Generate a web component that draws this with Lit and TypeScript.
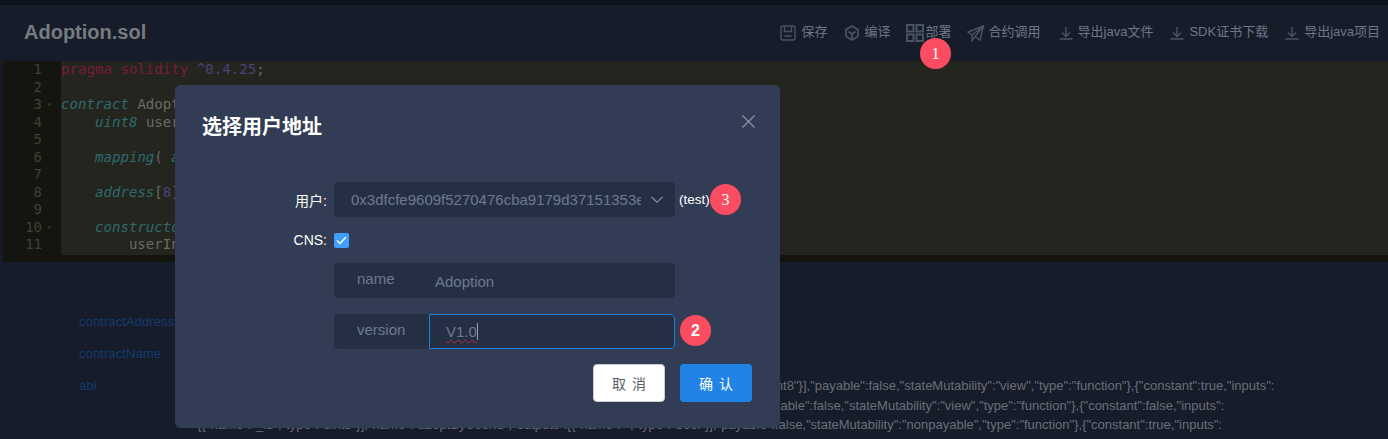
import { LitElement, html, css } from "lit";
import { customElement } from "lit/decorators.js";

const ICONS = {
  save: html`<svg class="ic" viewBox="0 0 16 16" width="16" height="16"><rect x="1" y="1" width="14" height="14" rx="2"/><path d="M4.5 1.5V6.5h7V1.5M4.5 11h7"/></svg>`,
  compile: html`<svg class="ic wide" viewBox="0 0 16 16" width="16" height="16"><path d="M8 1l6 3.4v7.2L8 15l-6-3.4V4.4z"/><path d="M4.5 6.5L8 9l3.5-2.5M8 9v5"/></svg>`,
  deploy: html`<svg class="ic thick" viewBox="0 0 18 18" width="18" height="18"><rect x="1" y="1" width="6.5" height="6.5"/><rect x="10.5" y="1" width="6.5" height="6.5"/><rect x="1" y="10.5" width="6.5" height="6.5"/><rect x="10.5" y="10.5" width="6.5" height="6.5"/></svg>`,
  call: html`<svg class="ic" viewBox="0 0 17 17" width="17" height="17"><path d="M1 7L16.5 1 13 15 8 11.5 5 16V10z"/><path d="M5 10L16.5 1 8 11.5"/></svg>`,
  down: html`<svg class="ic" viewBox="0 0 14 14" width="14" height="14"><path d="M7 1v9M3 6.5L7 10.5 11 6.5M0.5 13h13"/></svg>`,
};

const CODE = [
  html`<span class="kw">pragma solidity</span> <span class="num">^0.4.25</span>;`,
  html``,
  html`<span class="ty">contract</span> Adoption {`,
  html`    <span class="ty">uint8</span> userInfo;`,
  html``,
  html`    <span class="ty">mapping</span>( <span class="ty">address</span> =&gt; <span class="ty">uint8</span>) users;`,
  html``,
  html`    <span class="ty">address</span>[<span class="num">8</span>] adopters;`,
  html``,
  html`    <span class="ty">constructor</span>() <span class="kw">public</span> {`,
  html`        userInfo = <span class="num">1</span>;`,
];

@customElement("app-root")
export class AppRoot extends LitElement {
  static styles = css`
    :host {
      display: block;
      position: relative;
      width: 1388px;
      height: 439px;
      overflow: hidden;
      background: #161c2a;
      font-family: "Liberation Sans", "Noto Sans CJK SC", sans-serif;
    }
    .strip { height: 5px; background: #0f1320; }
    .head {
      height: 56px;
      display: flex;
      align-items: center;
      justify-content: space-between;
      padding: 0 8px 2px 24px;
      box-sizing: border-box;
    }
    .title { font-size: 20px; font-weight: 700; color: #777b80; }
    .tools { display: flex; gap: 15px; font-size: 13px; color: #6e7685; margin-top: 2px; }
    .tool { display: flex; align-items: center; gap: 5px; white-space: nowrap; }
    .tool span { padding-bottom: 5px; }
    .tool.m1 { margin-left: 1px; }
    .tool.m2 { margin-left: 2px; }
    .tool.m3 { margin-left: 3px; }
    .tool.tight { gap: 2px; }
    .ic { fill: none; stroke: #4a5364; stroke-width: 1.4; flex: none; }
    .ic.wide { stroke-width: 1.7; }
    .ic.thick { stroke-width: 2; }
    .editor {
      height: 201px;
      display: flex;
      background: #15150f;
      margin-left: 3px;
    }
    .gutter {
      width: 58px;
      flex: none;
      font: 14px/17.5px "DejaVu Sans Mono", monospace;
      color: #3f4038;
      box-sizing: border-box;
    }
    .num-line { display: flex; height: 17.5px; }
    .num-line b { font-weight: 400; width: 39px; text-align: right; }
    .num-line i { font-style: normal; margin-left: 5px; font-size: 8px; line-height: 17px; color: #3a3b34; }
    .code {
      flex: 1;
      height: 194px;
      background: #24251f;
      border-bottom-left-radius: 3px;
      font: 14.1px/17.5px "DejaVu Sans Mono", monospace;
      color: #6a6b66;
      white-space: pre;
    }
    .line { height: 17.5px; }
    .kw { color: #7a1c3a; }
    .num { color: #4f3f7a; }
    .ty { color: #2f6a6e; font-style: italic; }
    .details {
      display: grid;
      grid-template-columns: 119px 1fr;
      padding: 52px 0 0 79px;
      row-gap: 17px;
      font-size: 13px;
      line-height: 15px;
    }
    .key { color: #153a6e; white-space: nowrap; font-size: 13.2px; }
    .val { color: #6b6f78; white-space: pre; line-height: 19.5px; margin-top: -2px; min-height: 15px; }

    .dialog {
      position: absolute;
      left: 175px;
      top: 85px;
      width: 605px;
      height: 343px;
      background: #323c54;
      border-radius: 6px;
      box-sizing: border-box;
      padding: 28px 28px 0 27px;
      color: #fff;
    }
    .dhead { display: flex; justify-content: space-between; align-items: center; height: 25px; }
    .dtitle { font-size: 20px; font-weight: 700; color: #fff; }
    .close { margin-right: -3px; margin-top: -8px; }
    .close path { stroke: #8b93a5; stroke-width: 1.3; fill: none; }
    .form { margin-top: 44px; padding-left: 132px; display: flex; flex-direction: column; }
    .row { display: flex; align-items: center; }
    .row.check-row { margin-top: 15px; }
    .lab {
      width: 53px;
      margin-left: -60px;
      margin-right: 7px;
      text-align: right;
      font-size: 14px;
      color: #fff;
      white-space: nowrap;
    }
    .select {
      width: 341px;
      height: 35px;
      flex: none;
      box-sizing: border-box;
      background: #252f43;
      border-radius: 4px;
      display: flex;
      align-items: center;
      padding: 0 12px 0 17px;
      justify-content: space-between;
      color: #6c7a90;
      font-size: 15px;
    }
    .sel-text { width: 290px; overflow: hidden; white-space: nowrap; }
    .tag { margin-left: 4px; font-size: 13.5px; color: #fff; }
    .check {
      width: 15px;
      height: 15px;
      border-radius: 2px;
      background: #409eff;
      display: flex;
      align-items: center;
      justify-content: center;
    }
    .group {
      width: 341px;
      height: 35px;
      margin-top: 15px;
      display: flex;
      border-radius: 4px;
      overflow: hidden;
      background: #252f43;
      font-size: 15px;
      color: #6c7a90;
    }
    .group.second { margin-top: 16px; }
    .pre {
      width: 95px;
      flex: none;
      line-height: 32px;
      box-sizing: border-box;
      padding-left: 23px;
    }
    .inp { flex: 1; line-height: 37px; padding-left: 6px; }
    .inp.focus {
      border: 1px solid #1f7fd9;
      border-radius: 0 4px 4px 0;
      padding-left: 16px;
      line-height: 34px;
      box-sizing: border-box;
    }
    .sq { text-decoration: underline wavy #b8324a 1px; text-underline-offset: 2px; border-right: 1px solid #9aa3b5; }
    .foot { display: flex; justify-content: flex-end; gap: 15px; margin-top: 15px; }
    .btn {
      width: 72px;
      height: 38px;
      border-radius: 4px;
      box-sizing: border-box;
      display: flex;
      align-items: center;
      justify-content: center;
      font-size: 14px;
      letter-spacing: 6px;
      text-indent: 6px;
    }
    .cancel { background: #fff; color: #5a5e66; border: 1px solid #c8ccd4; }
    .ok { background: #2183e5; color: #fff; }
    .badge {
      position: absolute;
      width: 31px;
      height: 31px;
      border-radius: 50%;
      background: #fb4d62;
      color: #fff;
      display: flex;
      align-items: center;
      justify-content: center;
      font: 16px "Liberation Serif", serif;
    }
    .b1 { left: 920px; top: 38px; }
    .b2 { left: 680px; top: 315px; font-family: "Liberation Sans", sans-serif; font-weight: 700; }
    .b3 { left: 710px; top: 184px; }
  `;

  render() {
    return html`
      <div class="strip"></div>
      <div class="head">
        <div class="title">Adoption.sol</div>
        <div class="tools">
          <div class="tool">${ICONS.save}<span>保存</span></div>
          <div class="tool m1">${ICONS.compile}<span>编译</span></div>
          <div class="tool tight">${ICONS.deploy}<span>部署</span></div>
          <div class="tool">${ICONS.call}<span>合约调用</span></div>
          <div class="tool m3">${ICONS.down}<span>导出java文件</span></div>
          <div class="tool m2">${ICONS.down}<span>SDK证书下载</span></div>
          <div class="tool m2">${ICONS.down}<span>导出java项目</span></div>
        </div>
      </div>
      <div class="editor">
        <div class="gutter">
          ${CODE.map((_, i) => html`<div class="num-line"><b>${i + 1}</b>${i === 2 || i === 9 ? html`<i>▾</i>` : ""}</div>`)}
        </div>
        <div class="code">${CODE.map((l) => html`<div class="line">${l}</div>`)}</div>
      </div>
      <div class="details">
        <div class="key">contractAddress</div><div class="val"></div>
        <div class="key">contractName</div><div class="val"></div>
        <div class="key">abi</div>
        <div class="val">[{"constant":true,"inputs":[{"name":"","type":"address"}],"name":"users","outputs":[{"name":"","type":"uint8"}],"payable":false,"stateMutability":"view","type":"function"},{"constant":true,"inputs":
[{"name":"","type":"uint256"}],"name":"adopterAddresses","outputs":[{"name":"","type":"address"}],"payable":false,"stateMutability":"view","type":"function"},{"constant":false,"inputs":
[{"name":"_id","type":"uint8"}],"name":"adoptByUserId","outputs":[{"name":"","type":"bool"}],"payable":false,"stateMutability":"nonpayable","type":"function"},{"constant":true,"inputs":
[{"name":"_addr","type":"address"}],"name":"getUser","outputs":[{"name":"","type":"uint8"}],"payable":false,"stateMutability":"view","type":"function"}</div>
      </div>

      <div class="dialog">
        <div class="dhead">
          <div class="dtitle">选择用户地址</div>
          <svg class="close" width="13" height="13" viewBox="0 0 13 13"><path d="M.5.5l12 12M12.5.5l-12 12"/></svg>
        </div>
        <div class="form">
          <div class="row">
            <span class="lab">用户:</span>
            <div class="select">
              <span class="sel-text">0x3dfcfe9609f5270476cba9179d37151353e2f4a</span>
              <svg width="12" height="7" viewBox="0 0 12 7"><path d="M.5.8l5.5 5.5 5.5-5.5" fill="none" stroke="#8a93a5" stroke-width="1.2"/></svg>
            </div>
            <span class="tag">(test)</span>
          </div>
          <div class="row check-row">
            <span class="lab">CNS:</span>
            <div class="check"><svg width="11" height="9" viewBox="0 0 11 9"><path d="M1 4.5L4 7.5 10 1" fill="none" stroke="#fff" stroke-width="1.3"/></svg></div>
          </div>
          <div class="group">
            <div class="pre">name</div>
            <div class="inp">Adoption</div>
          </div>
          <div class="group second">
            <div class="pre">version</div>
            <div class="inp focus"><span class="sq">V1.0</span></div>
          </div>
        </div>
        <div class="foot">
          <div class="btn cancel">取消</div>
          <div class="btn ok">确认</div>
        </div>
      </div>

      <div class="badge b1">1</div>
      <div class="badge b2">2</div>
      <div class="badge b3">3</div>
    `;
  }
}
